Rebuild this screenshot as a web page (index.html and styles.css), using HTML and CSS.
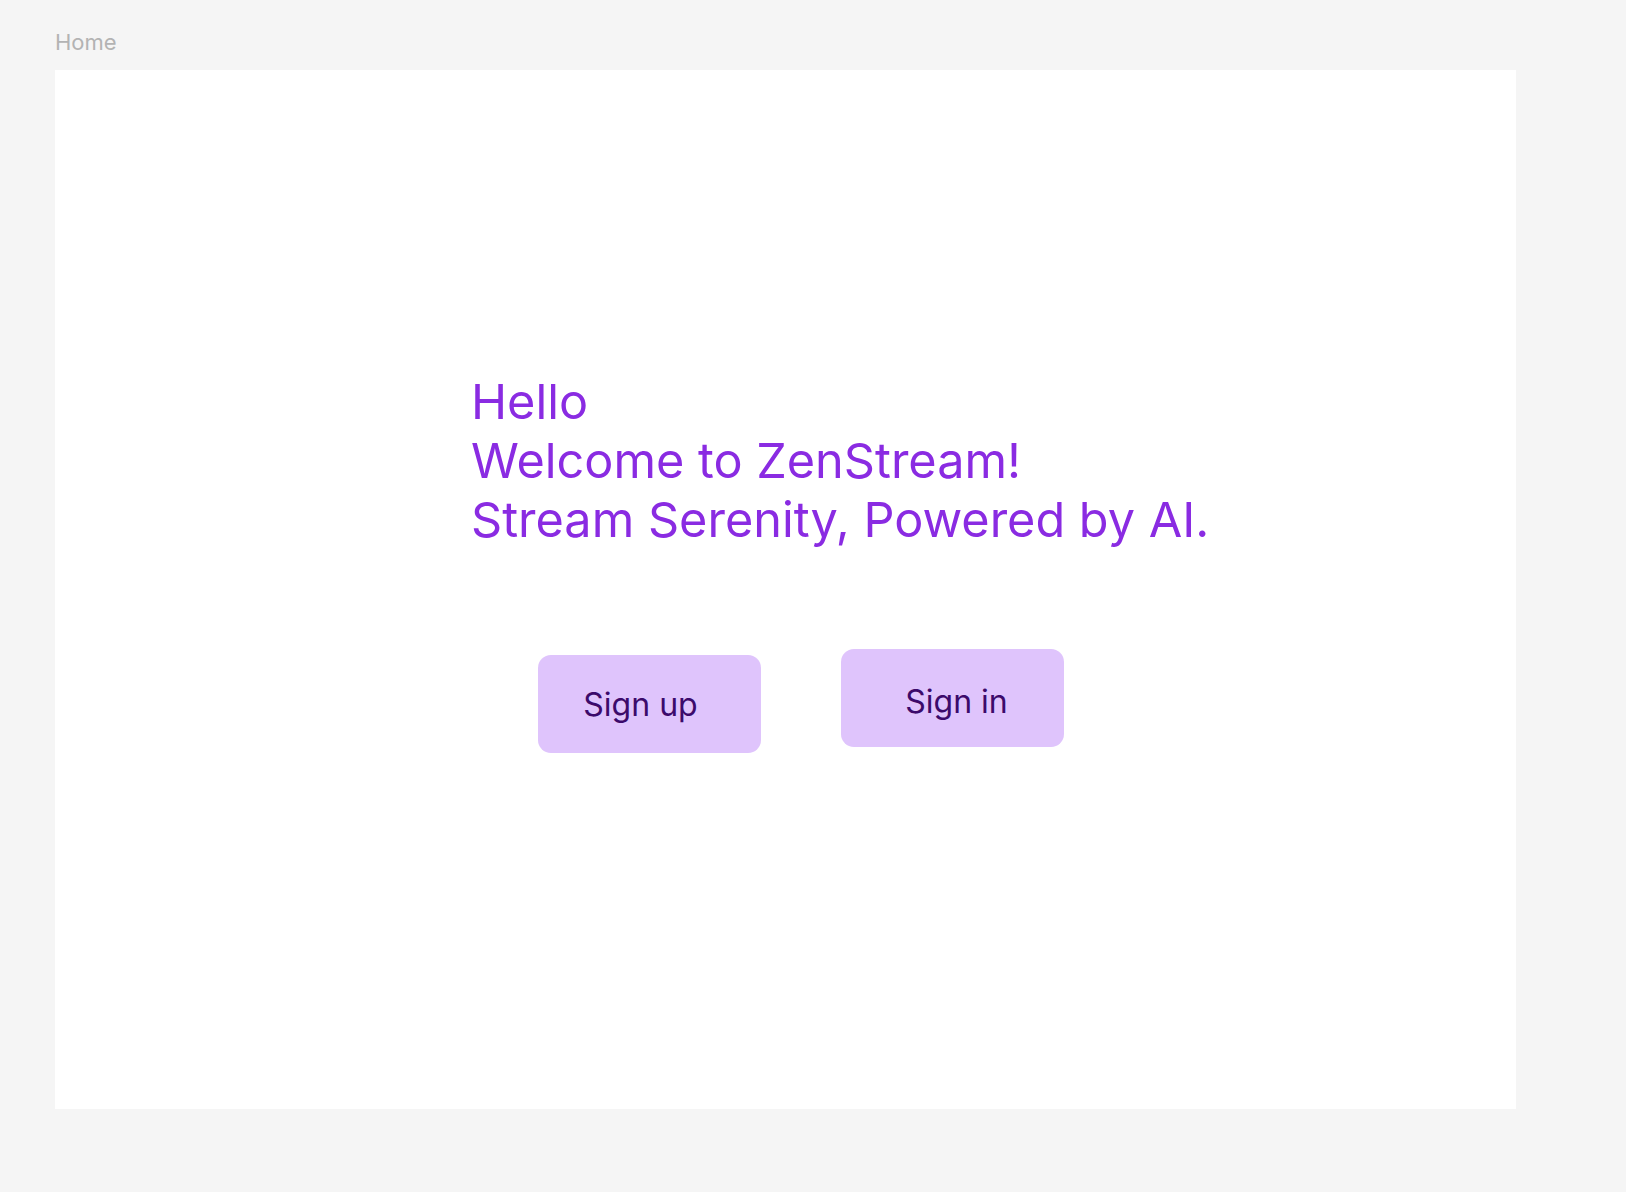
FILE: index.html
```html
<!DOCTYPE html>
<html lang="en">
<head>
<meta charset="utf-8">
<title>Home</title>
<link rel="stylesheet" href="styles.css">
</head>
<body>
  <div class="frame-label">Home</div>
  <main class="frame">
    <h1 class="hero">
      <span class="line">Hello</span>
      <span class="line">Welcome to ZenStream!</span>
      <span class="line">Stream Serenity, Powered by AI.</span>
    </h1>
    <div class="actions">
      <button class="btn btn-signup">Sign up</button>
      <button class="btn btn-signin">Sign in</button>
    </div>
  </main>
</body>
</html>
```

FILE: styles.css
```css
* { box-sizing: border-box; }
html, body {
  margin: 0;
  padding: 0;
  background: #f5f5f5;
  font-family: Inter, "Noto Sans", "Liberation Sans", sans-serif;
}
body {
  width: 1626px;
  height: 1192px;
  overflow: hidden;
}
.frame-label {
  height: 70px;
  padding: 29px 0 0 55px;
  font-size: 22px;
  line-height: 26px;
  color: #b3b3b3;
}
.frame {
  margin-left: 55px;
  width: 1461px;
  height: 1039px;
  background: #ffffff;
  padding: 302px 0 0 416px;
}
.hero {
  margin: 0;
  font-weight: 400;
  font-size: 48.6px;
  line-height: 59px;
  color: #8a2be2;
}
.line { display: block; }
.actions {
  display: flex;
  align-items: flex-start;
  gap: 80px;
  margin: 100px 0 0 67px;
}
.btn {
  width: 223px;
  height: 98px;
  border: none;
  border-radius: 13px;
  background: #dfc4fc;
  color: #3c0a6b;
  font-family: inherit;
  font-size: 32px;
  padding: 0;
}
.btn-signup { margin-top: 6px; padding-right: 18px; }
.btn-signin { padding: 7px 0 0 8px; }
```
